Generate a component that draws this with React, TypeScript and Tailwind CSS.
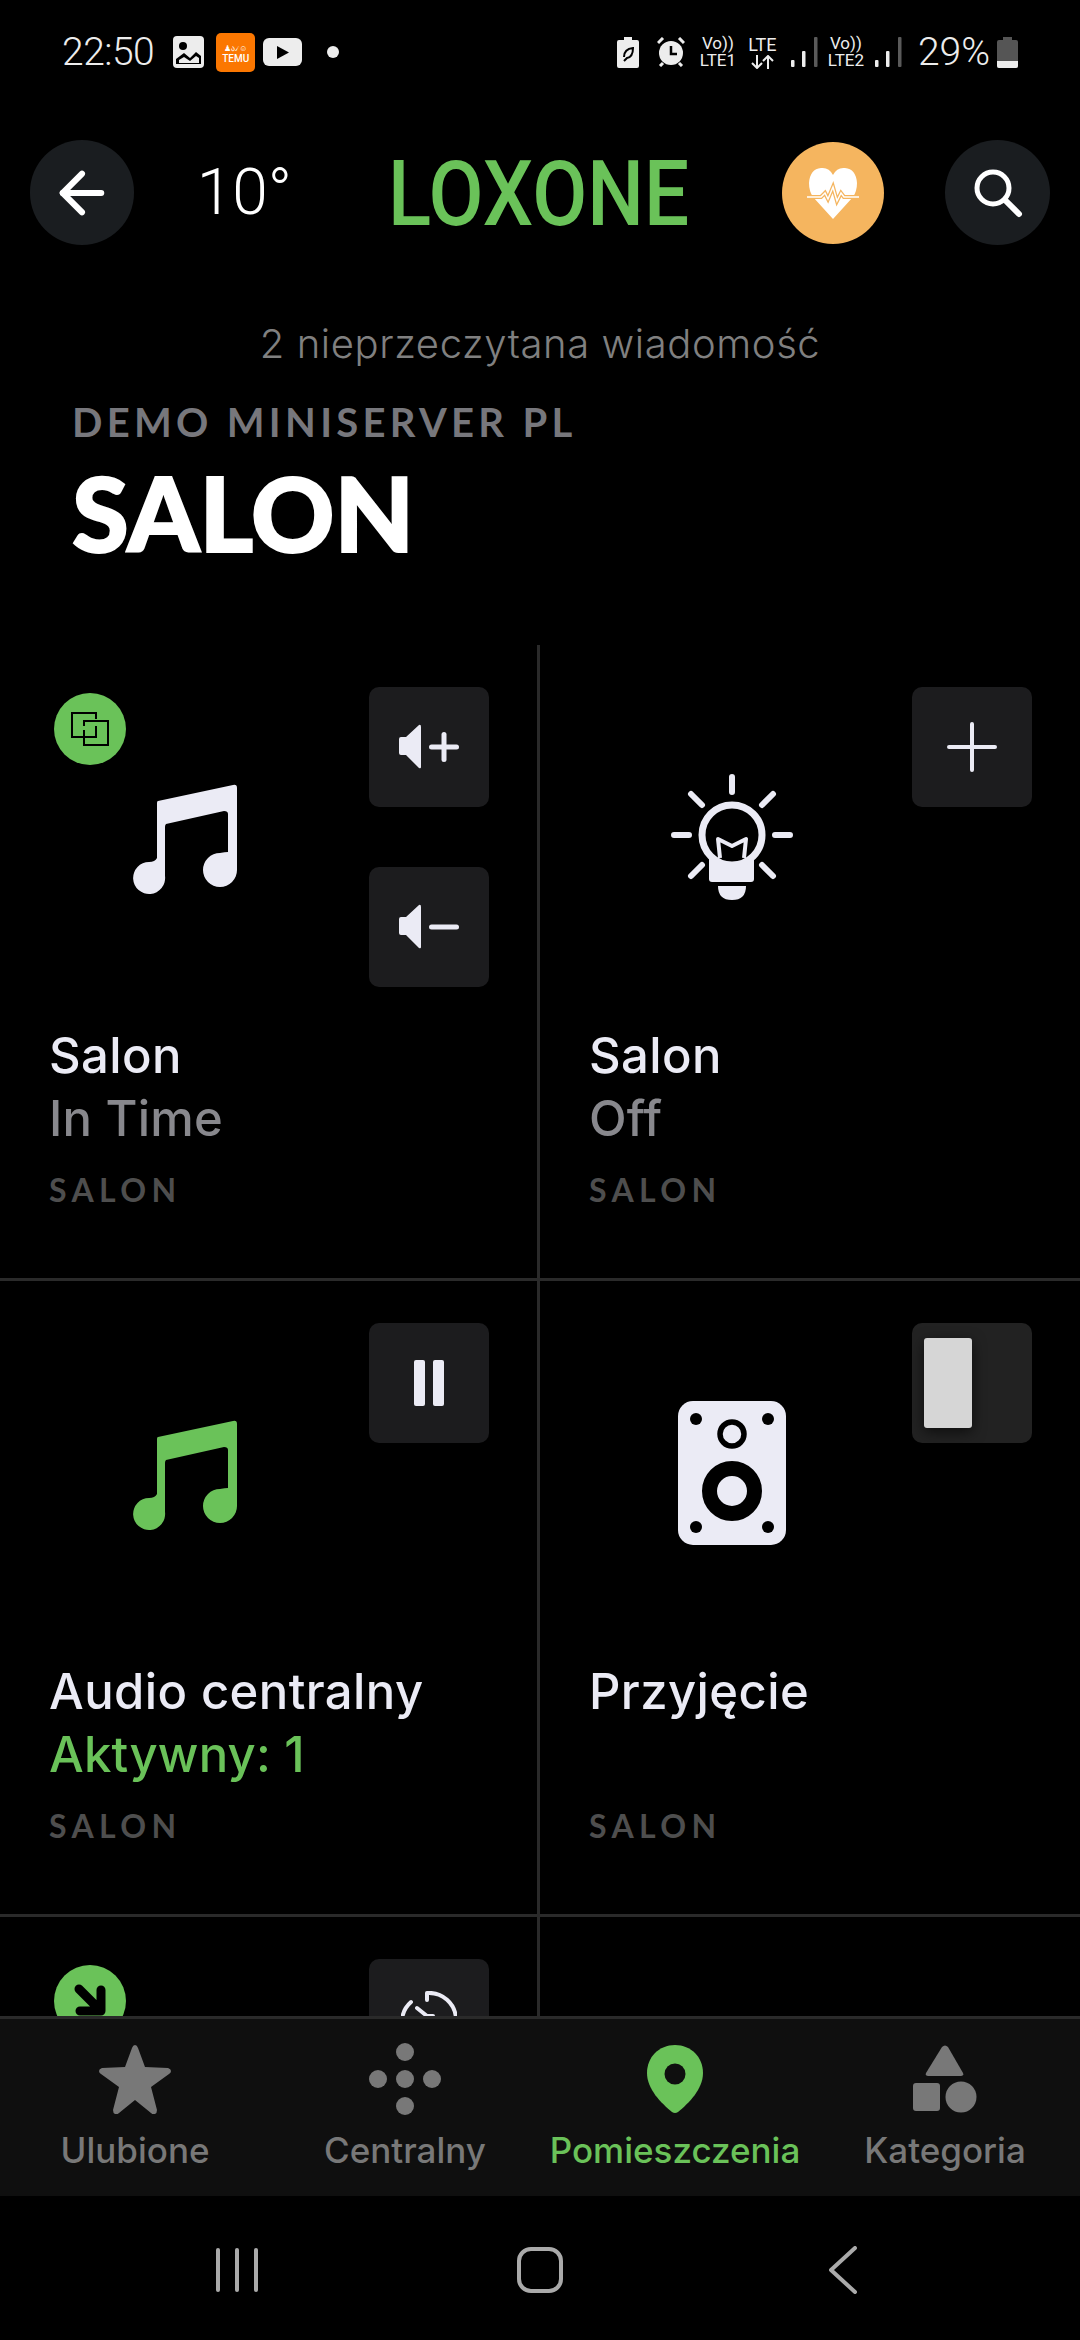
import { ArrowLeft } from 'lucide-react';
import type { ReactNode } from 'react';

const Note = ({ color }: { color: string }) => (
  <svg width="104" height="112" viewBox="0 0 104 112" fill={color}>
    <path d="M25 17 100 1Q104 0 104 4V86A17 17 0 1 1 87 69Q92 68 95 68V30Q95 27 91 27L33 40Q32 41 32 43V92A16 16 0 1 1 16 78Q22 78 24 74V19Q24 17 25 17Z" />
  </svg>
);

const Bulb = () => (
  <svg width="122" height="126" viewBox="0 0 122 126" fill="none" stroke="#ebebf5" strokeLinecap="round">
    <path d="M38 80h45v25q0 3-3 3H41q-3 0-3-3Z" fill="#ebebf5" stroke="none" />
    <path d="M47 112h28q0 14-14 14t-14-14Z" fill="#ebebf5" stroke="none" />
    <g strokeWidth="6">
      <path d="M61 3v15M3 61h15M104 61h15M20 20l11 11M102 20 91 31M31 91 20 102M91 91l11 11" />
    </g>
    <circle cx="61" cy="61" r="30" strokeWidth="7" fill="#000" />
    <path d="M49 84 47 65l14 7 14-7-2 19" strokeWidth="4" strokeLinecap="butt" strokeLinejoin="round" />
  </svg>
);

const Speaker = () => (
  <svg width="108" height="144" viewBox="0 0 108 144">
    <rect width="108" height="144" rx="15" fill="#ebebf5" />
    <g fill="#000">
      <circle cx="18" cy="18" r="6" />
      <circle cx="90" cy="18" r="6" />
      <circle cx="18" cy="126" r="6" />
      <circle cx="90" cy="126" r="6" />
    </g>
    <circle cx="54" cy="33" r="12" fill="#ebebf5" stroke="#000" strokeWidth="5.500" />
    <circle cx="54" cy="90" r="22.5" fill="#ebebf5" stroke="#000" strokeWidth="15" />
  </svg>
);

const VolIcon = ({ plus }: { plus?: boolean }) => (
  <svg width="60" height="46" viewBox="0 0 60 46" fill="#ebebf5">
    <path d="M2 13h5L20 1q2-1 2 2v40q0 2-2 1L7 31H2q-2 0-2-2V15q0-2 2-2Z" />
    <rect x="30" y="20.500" width="30" height="5" rx="2.500" />
    {plus && <rect x="42.500" y="8" width="5" height="30" rx="2.500" />}
  </svg>
);

const ActionBox = ({ children, className = 'bg-[#1c1c1e]' }: { children: ReactNode; className?: string }) => (
  <div className={`w-[120px] h-[120px] rounded-[10px] flex items-center justify-center ${className}`}>{children}</div>
);

type CellProps = {
  icon?: ReactNode;
  title?: string;
  sub?: string;
  subColor?: string;
  actions?: ReactNode;
  badge?: ReactNode;
  right?: boolean;
  iconClass?: string;
};

const Cell = ({ icon, title, sub, subColor = 'text-[#88888d]', actions, badge, right, iconClass = '' }: CellProps) => (
  <div className={`relative h-[636px] border-b-[3px] border-[#2a2a2a] pt-[42px] pl-[49px] ${right ? '' : 'border-r-[3px]'}`}>
    {badge && <div className="absolute left-[54px] top-[48px] w-[72px] h-[72px] rounded-full bg-[#6ac259] flex items-center justify-center">{badge}</div>}
    <div className="flex justify-between h-[337px] pr-[48px]">
      <div className={`flex justify-center ${iconClass}`}>{icon}</div>
      <div className="flex flex-col gap-[60px]">{actions}</div>
    </div>
    {title && (
      <>
        <div className="text-[49px] leading-[63px] font-medium tracking-[0.400px] text-[#ebebf5]">{title}</div>
        <div className={`text-[49px] leading-[63px] h-[63px] font-medium tracking-[0.200px] ${subColor}`}>{sub}</div>
        <div className="mt-[20px] text-[32px] leading-[40px] font-['Lato',sans-serif] font-bold tracking-[5.400px] text-[#4e4e4e]">SALON</div>
      </>
    )}
  </div>
);

const Star = () => (
  <svg width="72" height="69" viewBox="0 0 72 69" fill="#787878">
    <path d="M36 0q2 0 3 3l7 19 23 1q3 1 3 3t-2 3L52 42l6 23q0 3-2 4t-4-1L36 55 20 68q-2 2-4 1t-2-4l6-23L2 29q-2-1-2-3t3-3l23-1 7-19q1-3 3-3Z" />
  </svg>
);

const Dots = () => (
  <svg width="72" height="72" viewBox="0 0 72 72" fill="#787878">
    <circle cx="36" cy="9" r="9" />
    <circle cx="9" cy="36" r="9" />
    <circle cx="36" cy="36" r="9" />
    <circle cx="63" cy="36" r="9" />
    <circle cx="36" cy="63" r="9" />
  </svg>
);

const Pin = () => (
  <svg width="56" height="68" viewBox="0 0 56 68">
    <path d="M28 0C12 0 0 12 0 28c0 16 14 30 25 39q3 2 6 0c11-9 25-23 25-39C56 12 44 0 28 0Z" fill="#6ac259" />
    <circle cx="28" cy="29" r="10.500" fill="#0f0f0f" />
  </svg>
);

const Shapes = () => (
  <svg width="64" height="68" viewBox="0 0 64 68" fill="#787878">
    <path d="M29 2q3-3 6 0l15 26q1 3-2 3H15q-3 0-2-3Z" />
    <rect y="38" width="27" height="28" rx="3" />
    <circle cx="48" cy="52" r="15.500" />
  </svg>
);

const tabs = [
  { label: 'Ulubione', icon: <Star /> },
  { label: 'Centralny', icon: <Dots /> },
  { label: 'Pomieszczenia', icon: <Pin />, active: true },
  { label: 'Kategoria', icon: <Shapes /> },
];

const SignalBars = ({ className }: { className: string }) => (
  <svg className={className} width="27" height="30" viewBox="0 0 27 30">
    <rect x="0" y="23" width="3.500" height="7" rx="1" fill="#ededed" />
    <rect x="11" y="14" width="3.500" height="16" rx="1" fill="#ededed" />
    <rect x="23" y="0" width="3.500" height="30" rx="1" fill="#5a5a5a" />
  </svg>
);

const StatusBar = () => (
  <div className="h-[100px] relative shrink-0 text-[#ededed] font-['Roboto',sans-serif]">
    <div className="flex items-center h-[104px] pl-[62px]">
      <span className="text-[39px] leading-none font-light tracking-[-0.500px]">22:50</span>
      <svg className="ml-[19px]" width="31" height="32" viewBox="0 0 31 32">
        <rect width="31" height="32" rx="4" fill="#ededed" />
        <rect x="3" y="3" width="25" height="26" rx="1" fill="#ededed" />
        <circle cx="10" cy="10" r="4" fill="#000" />
        <path d="M3 28V23l8-6 6 5 6-6 5 4v8Z" fill="#000" />
        <path d="M6 27v-3l5-3 6 4 6-5 3 2v5Z" fill="#ededed" />
      </svg>
      <div className="ml-[12px] w-[39px] h-[39px] rounded-[5px] bg-[#fb7701] flex flex-col items-center justify-end pb-[8px] text-white text-[10px] leading-none font-medium">
        <span className="text-[8px] leading-[10px]">♟ა৴☺</span>
        <span>TEMU</span>
      </div>
      <div className="ml-[8px] w-[39px] h-[28px] rounded-[6px] bg-[#ededed] flex items-center justify-center">
        <svg width="12" height="13" viewBox="0 0 12 13"><path d="M0 0l12 6.500L0 13Z" fill="#000" /></svg>
      </div>
      <div className="ml-[25px] w-[12px] h-[12px] rounded-full bg-[#ededed]" />
    </div>
    <div className="absolute top-0 right-[62px] h-[104px] flex items-center">
      <svg width="22" height="31" viewBox="0 0 22 31" fill="#ededed">
        <path d="M7 0h8v3h5q2 0 2 2v24q0 2-2 2H2q-2 0-2-2V5q0-2 2-2h5Z" />
        <path d="M7 20q0-8 9-9 0 9-6 10l-3 3" fill="none" stroke="#000" strokeWidth="2" />
      </svg>
      <svg className="ml-[18px]" width="28" height="30" viewBox="0 0 28 30" fill="#ededed">
        <circle cx="14" cy="16" r="12" />
        <path d="M14 9v8h6" fill="none" stroke="#000" strokeWidth="2.500" />
        <path d="M1 6l5-5M27 6l-5-5M3 29l3-3M25 29l-3-3" stroke="#ededed" strokeWidth="3" />
      </svg>
      <div className="ml-[13px] w-[40px] text-center text-[17px] leading-[17px]">
        <div>Vo))</div>
        <div>LTE1</div>
      </div>
      <div className="ml-[8px] w-[33px] flex flex-col items-center text-[18px] leading-[17px]">
        <div>LTE</div>
        <svg className="mt-[2px]" width="23" height="14" viewBox="0 0 23 14" fill="none" stroke="#ededed" strokeWidth="2">
          <path d="M6 0v13M1 8l5 5 5-5M17 14V1M12 6l5-5 5 5" />
        </svg>
      </div>
      <SignalBars className="ml-[12px]" />
      <div className="ml-[8px] w-[40px] text-center text-[17px] leading-[17px]">
        <div>Vo))</div>
        <div>LTE2</div>
      </div>
      <SignalBars className="ml-[9px]" />
      <span className="ml-[16px] text-[39px] leading-none font-light">29%</span>
      <svg className="ml-[7px]" width="21" height="31" viewBox="0 0 21 31">
        <path d="M6 0h9v3h4q2 0 2 2v24q0 2-2 2H2q-2 0-2-2V5q0-2 2-2h4Z" fill="#555" />
        <path d="M0 24h21v5q0 2-2 2H2q-2 0-2-2Z" fill="#ededed" />
      </svg>
    </div>
  </div>
);

export default function App() {
  return (
    <div className="w-[1080px] h-[2340px] bg-black flex flex-col overflow-hidden font-['Inter',sans-serif]">
      <StatusBar />

      <div className="h-[105px] mt-[40px] shrink-0 flex items-center pl-[30px] pr-[30px]">
        <div className="w-[104px] h-[105px] rounded-full bg-[#1a1d20] flex items-center justify-center">
          <ArrowLeft size={66} color="#fff" strokeWidth={2.200} />
        </div>
        <span className="ml-[63px] w-[192px] text-[64px] leading-none font-light text-white font-['Roboto',sans-serif]">10°</span>
        <svg className="overflow-visible" width="301" height="64" viewBox="0 0 301 64">
          <text x="0" y="64" fill="#6ac259" fontFamily="Roboto, sans-serif" fontWeight="500" fontSize="90" textLength="301" lengthAdjust="spacingAndGlyphs">LOXONE</text>
        </svg>
        <div className="ml-[93px] w-[102px] h-[102px] rounded-full bg-[#f5b55f] flex items-center justify-center">
          <svg width="52" height="52" viewBox="0 0 52 52" fill="#fff">
            <path d="M26 52 6 30Q2 24 2 16 3 2 14 1q8-1 12 7 4-8 12-7 11 1 12 15 0 8-4 14Z" />
            <path d="M0 30h14l4-4 3 6 5-12 4 14 4-8 3 4h15" fill="none" stroke="#f5b55f" strokeWidth="4" />
            <path d="M0 30h14l4-4 3 6 5-12 4 14 4-8 3 4h15" fill="none" stroke="#fff" strokeWidth="1.500" />
          </svg>
        </div>
        <div className="ml-[61px] w-[105px] h-[105px] rounded-full bg-[#1a1d20] flex items-center justify-center">
          <svg width="50" height="50" viewBox="0 0 50 50" fill="none" stroke="#fff" strokeLinecap="round">
            <circle cx="20" cy="20" r="16" strokeWidth="5" />
            <path d="M33 33l13 13" strokeWidth="6" />
          </svg>
        </div>
      </div>

      <div className="mt-[74px] text-center text-[40px] leading-[50px] font-light tracking-[0.600px] text-[#808080] shrink-0">2 nieprzeczytana wiadomość</div>
      <div className="pl-[72px] mt-[29px] text-[40px] leading-[48px] font-['Lato',sans-serif] font-bold tracking-[4.300px] text-[#77777c] shrink-0">DEMO MINISERVER PL</div>
      <div className="pl-[72px] mt-[16px] text-[103px] leading-[100px] font-['Lato',sans-serif] font-black [-webkit-text-stroke:2px_#fff] text-white shrink-0">SALON</div>

      <div className="flex-1 min-h-0 overflow-hidden mt-[83px]">
        <div className="grid grid-cols-2">
          <Cell
            icon={<Note color="#ebebf5" />}
            iconClass="w-[272px] pt-[97px]"
            title="Salon"
            sub="In Time"
            badge={
              <svg width="38" height="34" viewBox="0 0 38 34" fill="none" stroke="#000" strokeWidth="2">
                <path d="M25 7V1H1v24h11" />
                <path d="M13 14V9h24v24H13v-7" />
                <path d="M13 18v7h12V14" />
              </svg>
            }
            actions={
              <>
                <ActionBox><VolIcon plus /></ActionBox>
                <ActionBox><VolIcon /></ActionBox>
              </>
            }
          />
          <Cell
            right
            icon={<Bulb />}
            iconClass="w-[286px] pt-[87px]"
            title="Salon"
            sub="Off"
            actions={
              <ActionBox>
                <svg width="50" height="50" viewBox="0 0 50 50" stroke="#ebebf5" strokeWidth="4" strokeLinecap="round"><path d="M25 2v46M2 25h46" /></svg>
              </ActionBox>
            }
          />
          <Cell
            icon={<Note color="#6ac259" />}
            iconClass="w-[272px] pt-[97px]"
            title="Audio centralny"
            sub="Aktywny: 1"
            subColor="text-[#6ac259]"
            actions={
              <ActionBox>
                <div className="flex gap-[8px]">
                  <div className="w-[11px] h-[46px] rounded-[2px] bg-[#ebebf5]" />
                  <div className="w-[11px] h-[46px] rounded-[2px] bg-[#ebebf5]" />
                </div>
              </ActionBox>
            }
          />
          <Cell
            right
            icon={<Speaker />}
            iconClass="w-[286px] pt-[78px]"
            title="Przyjęcie"
            actions={
              <ActionBox className="bg-[#222222] !justify-start pl-[12px]">
                <div className="w-[48px] h-[90px] rounded-[3px] bg-[#d6d6d6] shadow-[0_4px_14px_rgba(0,0,0,0.6)]" />
              </ActionBox>
            }
          />
          <Cell
            badge={
              <svg width="40" height="40" viewBox="0 0 40 40" fill="none" stroke="#000" strokeWidth="9" strokeLinecap="round" strokeLinejoin="round"><path d="M9 8l22 22M31 9v21H10" /></svg>
            }
            actions={
              <ActionBox>
                <svg width="56" height="56" viewBox="0 0 56 56" fill="none" stroke="#ebebf5" strokeWidth="4" strokeLinecap="round"><path d="M26 2A27 27 0 0 1 55 28M1 28A27 27 0 0 1 10 11M26 2v7M16 17l10 8h6" /></svg>
              </ActionBox>
            }
          />
          <Cell right />
        </div>
      </div>

      <div className="h-[180px] shrink-0 border-t-[3px] border-[#2a2a2a] bg-[#0f0f0f] grid grid-cols-4">
        {tabs.map((t) => (
          <div key={t.label} className="flex flex-col items-center pt-[24px]">
            <div className="h-[72px] flex items-center">{t.icon}</div>
            <span className={`mt-[12px] text-[35px] leading-[46px] font-medium ${t.active ? 'text-[#6ac259]' : 'text-[#787878]'}`}>{t.label}</span>
          </div>
        ))}
      </div>

      <div className="h-[144px] shrink-0 grid grid-cols-3 items-center pl-[86px] pr-[86px] pt-[4px]">
        <div className="flex justify-center gap-[15px]">
          <div className="w-[4px] h-[44px] rounded-full bg-[#aaaaaa]" />
          <div className="w-[4px] h-[44px] rounded-full bg-[#aaaaaa]" />
          <div className="w-[4px] h-[44px] rounded-full bg-[#aaaaaa]" />
        </div>
        <div className="flex justify-center">
          <div className="w-[46px] h-[46px] rounded-[14px] border-[4px] border-[#aaaaaa]" />
        </div>
        <div className="flex justify-center">
          <svg width="28" height="48" viewBox="0 0 28 48" fill="none" stroke="#aaaaaa" strokeWidth="4" strokeLinecap="round" strokeLinejoin="round"><path d="M26 2 2 24l24 22" /></svg>
        </div>
      </div>
    </div>
  );
}
